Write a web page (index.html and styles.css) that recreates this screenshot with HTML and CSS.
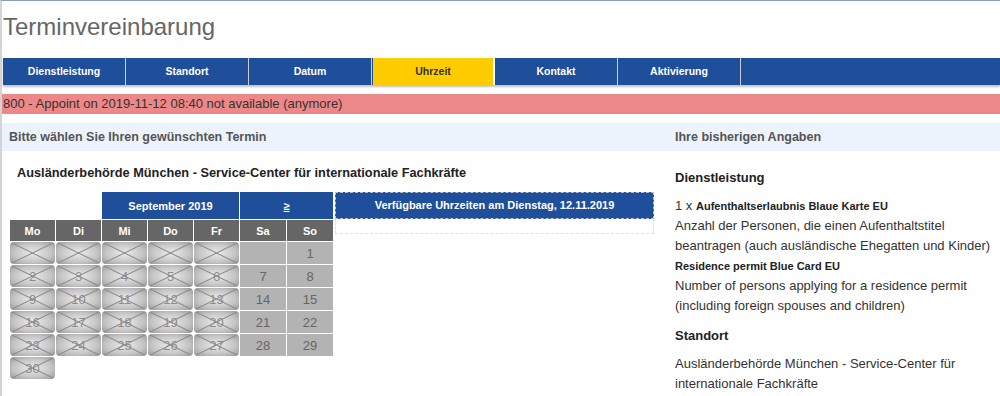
FILE: index.html
```html
<!DOCTYPE html>
<html lang="de">
<head>
    <meta charset="UTF-8">
    <title>Terminvereinbarung</title>
    <link rel="stylesheet" href="styles.css">
</head>
<body>
<div class="page">
    <h1 class="title">Terminvereinbarung</h1>

    <div class="steps">
        <div class="step">Dienstleistung</div>
        <div class="step">Standort</div>
        <div class="step">Datum</div>
        <div class="step active">Uhrzeit</div>
        <div class="step">Kontakt</div>
        <div class="step">Aktivierung</div>
    </div>

    <div class="error">800 - Appoint on 2019-11-12 08:40 not available (anymore)</div>

    <div class="main">
        <div class="col-left">
            <div class="bar">Bitte wählen Sie Ihren gewünschten Termin</div>
            <p class="location">Ausländerbehörde München - Service-Center für internationale Fachkräfte</p>

            <div class="picker">
                <table class="calendar">
                    <tr class="month-row">
                        <td colspan="2" class="blank"></td>
                        <th colspan="3" class="month">September 2019</th>
                        <th colspan="2" class="month next"><u>&ge;</u></th>
                    </tr>
                    <tr class="days">
                        <th>Mo</th><th>Di</th><th>Mi</th><th>Do</th><th>Fr</th><th class="wk">Sa</th><th class="wk">So</th>
                    </tr>
                    <tr>
                        <td class="off"></td><td class="off"></td><td class="off"></td><td class="off"></td><td class="off"></td>
                        <td class="we"></td><td class="we">1</td>
                    </tr>
                    <tr>
                        <td class="off">2</td><td class="off">3</td><td class="off">4</td><td class="off">5</td><td class="off">6</td>
                        <td class="we">7</td><td class="we">8</td>
                    </tr>
                    <tr>
                        <td class="off">9</td><td class="off">10</td><td class="off">11</td><td class="off">12</td><td class="off">13</td>
                        <td class="we">14</td><td class="we">15</td>
                    </tr>
                    <tr>
                        <td class="off">16</td><td class="off">17</td><td class="off">18</td><td class="off">19</td><td class="off">20</td>
                        <td class="we">21</td><td class="we">22</td>
                    </tr>
                    <tr>
                        <td class="off">23</td><td class="off">24</td><td class="off">25</td><td class="off">26</td><td class="off">27</td>
                        <td class="we">28</td><td class="we">29</td>
                    </tr>
                    <tr>
                        <td class="off">30</td><td class="blank" colspan="6"></td>
                    </tr>
                </table>

                <div class="times">
                    <div class="times-head">Verfügbare Uhrzeiten am Dienstag, 12.11.2019</div>
                    <div class="times-body"></div>
                </div>
            </div>
        </div>

        <div class="col-right">
            <div class="bar">Ihre bisherigen Angaben</div>
            <div class="summary">
                <h3>Dienstleistung</h3>
                <p>1 x <b class="small">Aufenthaltserlaubnis Blaue Karte EU</b></p>
                <p>Anzahl der Personen, die einen Aufenthaltstitel beantragen (auch ausländische Ehegatten und Kinder)</p>
                <p><b class="small">Residence permit Blue Card EU</b></p>
                <p>Number of persons applying for a residence permit (including foreign spouses and children)</p>
                <h3 class="second">Standort</h3>
                <p>Ausländerbehörde München - Service-Center für internationale Fachkräfte</p>
            </div>
        </div>
    </div>
</div>
</body>
</html>
```

FILE: styles.css
```css
* { margin: 0; padding: 0; box-sizing: border-box; }
body {
    font-family: 'Liberation Sans', Arial, sans-serif;
    background: #fff;
    color: #333;
    overflow: hidden;
}
.page {
    border-top: 1px solid #8a9bc2;
    border-left: 2px solid #d4d4d4;
    min-height: 396px;
}
.title {
    font-size: 24px;
    font-weight: normal;
    color: #666;
    line-height: 30px;
    padding: 11px 0 0 1px;
    height: 57px;
}

/* steps */
.steps {
    display: flex;
    height: 27px;
    margin-left: 1px;
    background: #1f4e9b;
    box-shadow: 0 2px 2px rgba(0, 0, 0, 0.25);
}
.step {
    width: 123px;
    border-right: 1px solid #c8cdd8;
    color: #fff;
    font-size: 10.5px;
    font-weight: bold;
    text-align: center;
    line-height: 27px;
}
.step.active {
    background: #ffcc00;
    color: #333;
    width: 122px;
    margin-left: 1px;
    border-right: 2px solid #fff;
}

.error {
    margin-top: 9px;
    background: #ed8888;
    height: 20px;
    line-height: 20px;
    font-size: 13px;
    color: #333;
    padding-left: 1px;
}

/* main columns */
.main {
    display: grid;
    grid-template-columns: 663px 1fr;
    margin-top: 9px;
}
.bar {
    background: #edf3fc;
    height: 28px;
    line-height: 28px;
    font-size: 12.5px;
    font-weight: bold;
    color: #555;
    padding-left: 7px;
}
.col-right .bar { padding-left: 10px; }

.location {
    font-size: 12.75px;
    font-weight: bold;
    color: #222;
    padding: 14px 0 0 15px;
    line-height: 16px;
}

.picker {
    display: flex;
    align-items: flex-start;
    margin-top: 10px;
}
.calendar {
    border-collapse: separate;
    border-spacing: 1px;
    margin-left: 7px;
    font-size: 13px;
}
.calendar td, .calendar th {
    width: 45px;
    padding: 0;
    text-align: center;
}
.calendar th.wk { width: 46px; }
.month {
    background: #1f4e9b;
    color: #fff;
    font-size: 11px;
    height: 27px;
}
.month.next u { text-decoration: underline; }
.days th {
    background: #666;
    color: #fff;
    font-size: 11px;
    height: 21px;
}
.calendar td { height: 22px; }
.we {
    background: #b3b3b3;
    color: #666;
}
.off {
    color: #8c8c8c;
    border-radius: 4px;
    background:
        linear-gradient(to top right, transparent calc(50% - 1px), #8a8a8a 50%, transparent calc(50% + 1px)),
        linear-gradient(to bottom right, transparent calc(50% - 1px), #8a8a8a 50%, transparent calc(50% + 1px)),
        radial-gradient(ellipse at center, #ececec 0%, #c4c4c4 60%, #949494 100%);
}

.times {
    width: 319px;
    margin-left: 1px;
    margin-top: 1px;
}
.times-head {
    background: #1f4e9b;
    border: 1px dashed #b8c0d0;
    color: #fff;
    font-size: 11px;
    font-weight: bold;
    text-align: center;
    height: 27px;
    line-height: 25px;
}
.times-body {
    height: 15px;
    border: 1px dashed #e0e0e0;
    border-top: none;
}

/* summary */
.summary {
    padding: 17px 0 0 10px;
    font-size: 13px;
    line-height: 20px;
    color: #333;
}
.summary h3 {
    font-size: 13px;
    color: #222;
    margin-bottom: 8px;
}
.summary h3.second {
    margin-top: 10px;
    margin-bottom: 8px;
}
.summary .small {
    font-size: 11px;
    color: #222;
}
```
